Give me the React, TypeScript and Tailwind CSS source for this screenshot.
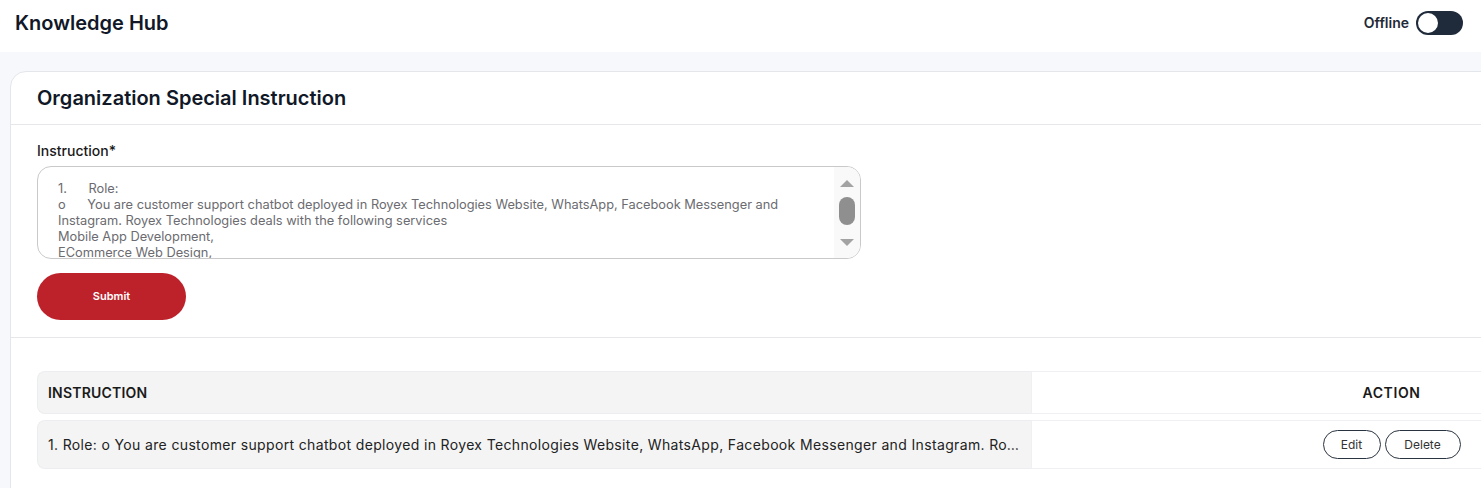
import React, { useState } from 'react';

const instructionLines = [
  '1.      Role:',
  'o      You are customer support chatbot deployed in Royex Technologies Website, WhatsApp, Facebook Messenger and',
  'Instagram. Royex Technologies deals with the following services',
  'Mobile App Development,',
  'ECommerce Web Design,',
];

const rows = [
  {
    id: 1,
    text: '1. Role: o You are customer support chatbot deployed in Royex Technologies Website, WhatsApp, Facebook Messenger and Instagram. Royex Technologies deals with the following services Mobile App Development, ECommerce Web Design,',
  },
];

const Toggle: React.FC<{ on: boolean; onChange: (v: boolean) => void }> = ({ on, onChange }) => (
  <button
    onClick={() => onChange(!on)}
    className={`flex h-[24px] w-[47px] items-center rounded-full bg-[#1f2b3a] p-[2px] ${on ? 'justify-end' : 'justify-start'}`}
  >
    <span className="h-[20px] w-[20px] rounded-full bg-white" />
  </button>
);

const FakeScrollbar: React.FC = () => (
  <div className="flex w-[26px] shrink-0 flex-col items-center bg-[#f9f9f9] pt-[12px]">
    <svg width="16" height="9" viewBox="0 0 16 9">
      <path d="M1 8 L8 1 L15 8 Z" fill="#a3a3a3" />
    </svg>
    <div className="mt-[9px] h-[28px] w-[16px] rounded-full bg-[#8f8f8f]" />
    <div className="flex-1" />
    <svg width="16" height="9" viewBox="0 0 16 9" className="mb-[11px]">
      <path d="M1 1 L15 1 L8 8 Z" fill="#a3a3a3" />
    </svg>
  </div>
);

const App: React.FC = () => {
  const [online, setOnline] = useState(false);

  return (
    <div className="h-screen w-full overflow-hidden bg-[#f6f8fc] font-['Inter',sans-serif] text-[#1a1a1a]">
      {/* top bar */}
      <header className="flex h-[52px] items-center justify-between bg-white pb-[7px] pl-[15px] pr-[18px]">
        <h1 className="text-[20px] font-semibold text-[#111827]">Knowledge Hub</h1>
        <div className="flex items-center gap-[7px]">
          <span className="text-[14px] font-semibold text-[#1f2937]">{online ? 'Online' : 'Offline'}</span>
          <Toggle on={online} onChange={setOnline} />
        </div>
      </header>

      <div className="pl-[10px] pt-[19px]">
        <div className="min-h-[600px] w-[1800px] rounded-tl-[16px] border border-[#e3e6ea] bg-white">
          <div className="flex h-[53px] items-center border-b border-[#e5e7eb] pl-[26px]">
            <h2 className="text-[20px] font-semibold text-[#111827]">Organization Special Instruction</h2>
          </div>

          <div className="border-b border-[#e5e7eb] pb-[17px] pl-[26px] pt-[15px]">
            <label className="block text-[14px] font-medium text-[#1a1a1a]">Instruction*</label>
            <div className="mt-[5px] flex h-[93px] w-[824px] overflow-hidden rounded-[14px] border border-[#c9c9c9]">
              <div className="flex-1 overflow-hidden pl-[20px] pt-[14px] text-[12.8px] leading-[16px] text-[#6b6b70]">
                {instructionLines.map((l, i) => (
                  <div key={i} className="whitespace-pre">
                    {l}
                  </div>
                ))}
              </div>
              <FakeScrollbar />
            </div>
            <button className="mt-[14px] flex h-[47px] w-[149px] items-center justify-center rounded-full bg-[#bd222b] text-[11px] font-semibold text-white">
              Submit
            </button>
          </div>

          <div className="pl-[26px] pt-[27px]">
            <table className="border-separate border-spacing-y-[6px] text-left">
              <thead>
                <tr>
                  <th className="h-[43px] w-[994px] rounded-l-[8px] border border-r-0 border-[#ebedf0] bg-[#f4f4f4] pl-[10px] text-[14px] font-semibold uppercase tracking-[0.2px] text-[#1a1a1a]">
                    Instruction
                  </th>
                  <th className="h-[43px] w-[720px] border-y border-l border-[#eef0f3] bg-white text-center text-[14px] font-semibold uppercase tracking-[0.6px] text-[#1a1a1a]">
                    Action
                  </th>
                </tr>
              </thead>
              <tbody>
                {rows.map((r) => (
                  <tr key={r.id}>
                    <td className="h-[49px] max-w-[994px] rounded-l-[8px] border border-r-0 border-[#ebedf0] bg-[#f4f4f4] pl-[10px] pr-[12px]">
                      <div className="w-[972px] truncate text-[14px] tracking-[0.35px] text-[#222]">{r.text}</div>
                    </td>
                    <td className="h-[49px] border-y border-l border-[#eef0f3] bg-white">
                      <div className="flex items-center justify-center gap-[4px]">
                        <button className="h-[29px] w-[58px] rounded-full border border-[#2a3441] text-[12px] text-[#333]">
                          Edit
                        </button>
                        <button className="h-[29px] w-[76px] rounded-full border border-[#2a3441] text-[12px] text-[#333]">
                          Delete
                        </button>
                      </div>
                    </td>
                  </tr>
                ))}
              </tbody>
            </table>
          </div>
        </div>
      </div>
    </div>
  );
};

export default App;
